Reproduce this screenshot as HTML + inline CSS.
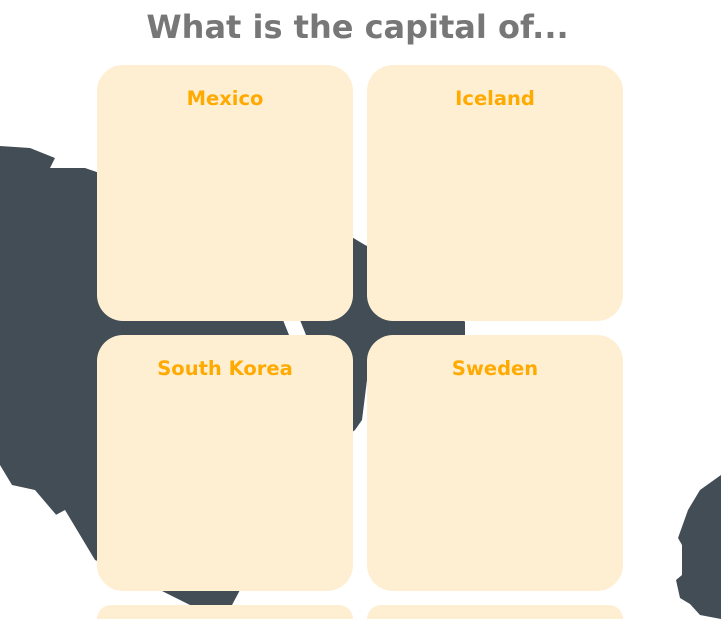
<!DOCTYPE html>
<html><head><style>
html,body{margin:0;padding:0;background:#fff;width:721px;height:619px;overflow:hidden;position:relative;font-family:"DejaVu Sans","Liberation Sans",sans-serif}
h1{position:absolute;top:8px;left:0;width:715px;text-align:center;margin:0;font-size:32px;font-weight:bold;color:#777}
.card{position:absolute;width:256px;height:256px;background:#feefd3;border-radius:26px;text-align:center;box-sizing:border-box;padding-top:22px;color:#ffaa00;font-weight:bold;font-size:19.5px}
.short{height:14px;border-radius:26px 26px 0 0;padding:0}
svg{position:absolute;left:0;top:0}
</style></head><body>
<svg width="721" height="619">
<path fill="#434d56" d="M0,146 L30,148 L55,158 L50,168 L85,168 L120,180 L300,220 L350,236 L365,245 L420,270 L450,300 L465,322 L465,336 L400,360 L367,380 L362,420 L355,430 L300,470 L260,540 L240,590 L232,605 L190,605 L160,590 L130,575 L95,560 L85,550 L65,525 L52,510 L35,490 L12,485 L0,465 Z"/>
<path fill="#fff" d="M52,517 L65,510 L95,560 L90,566 Z"/>
<path fill="#fff" d="M283,320 L300,320 L306,335 L289,335 Z"/>
<path fill="#434d56" d="M721,475 L700,490 L688,510 L678,538 L682,545 L682,575 L676,580 L680,598 L690,604 L700,615 L721,619 Z"/>
</svg>
<h1>What is the capital of...</h1>
<div class="card" style="left:97px;top:65px">Mexico</div>
<div class="card" style="left:367px;top:65px">Iceland</div>
<div class="card" style="left:97px;top:335px">South Korea</div>
<div class="card" style="left:367px;top:335px">Sweden</div>
<div class="card short" style="left:97px;top:605px"></div>
<div class="card short" style="left:367px;top:605px"></div>
</body></html>
